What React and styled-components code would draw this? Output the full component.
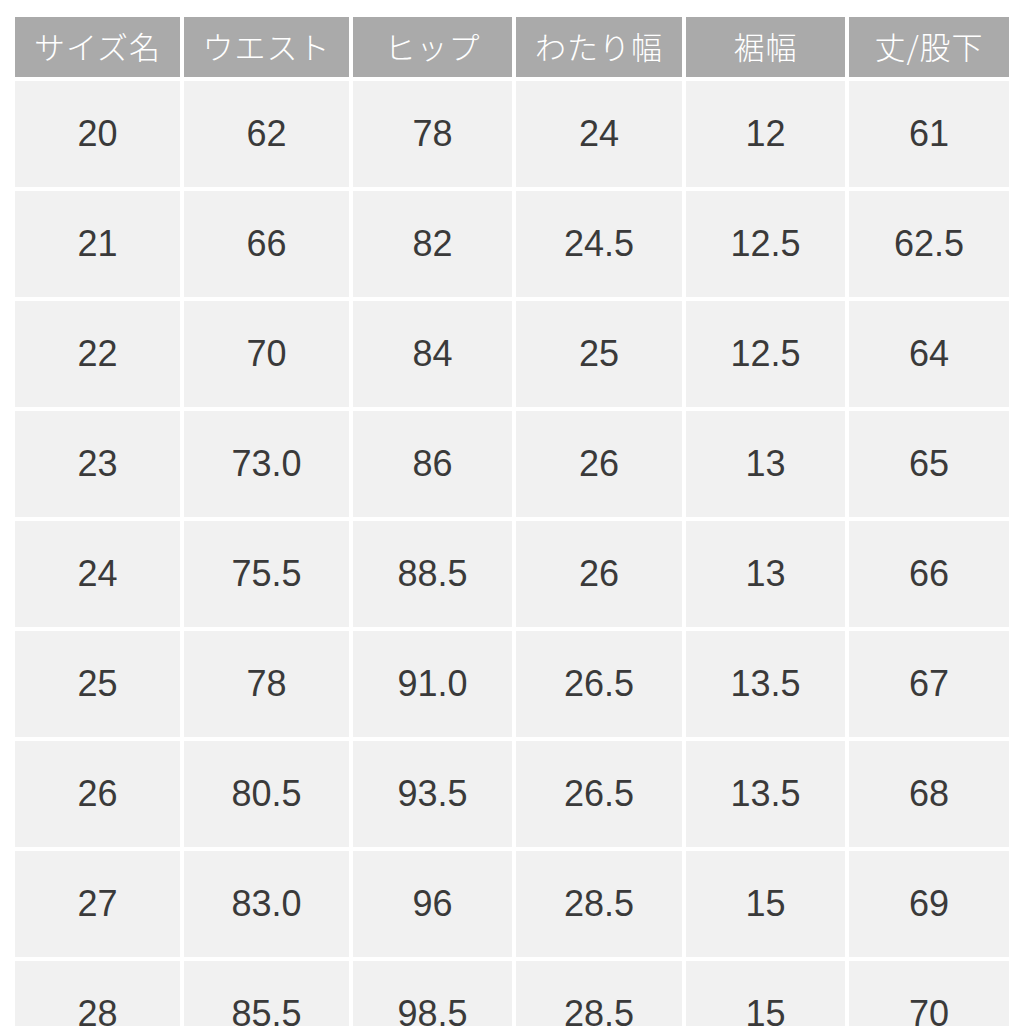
import React from 'react';
import styled, { createGlobalStyle } from 'styled-components';

const GlobalStyle = createGlobalStyle`
  html, body {
    margin: 0;
    padding: 0;
    background: #ffffff;
  }
  body {
    font-family: "Noto Sans CJK JP", "Noto Sans", sans-serif;
    color: #333333;
  }
`;

const HEADERS = ['サイズ名', 'ウエスト', 'ヒップ', 'わたり幅', '裾幅', '丈/股下'];

const ROWS = [
  ['20', '62', '78', '24', '12', '61'],
  ['21', '66', '82', '24.5', '12.5', '62.5'],
  ['22', '70', '84', '25', '12.5', '64'],
  ['23', '73.0', '86', '26', '13', '65'],
  ['24', '75.5', '88.5', '26', '13', '66'],
  ['25', '78', '91.0', '26.5', '13.5', '67'],
  ['26', '80.5', '93.5', '26.5', '13.5', '68'],
  ['27', '83.0', '96', '28.5', '15', '69'],
  ['28', '85.5', '98.5', '28.5', '15', '70'],
];

const Page = styled.div`
  padding: 17px 18px 0 15px;
  height: 1026px;
  overflow: hidden;
  box-sizing: border-box;
`;

const Table = styled.div`
  display: grid;
  grid-template-columns: 165px 165px 159px 166px 159px 160px;
  grid-auto-rows: 106px;
  grid-template-rows: 60px;
  gap: 4px;
`;

const HeadCell = styled.div`
  background: #aaaaaa;
  color: #ffffff;
  font-size: 31px;
  font-weight: 300;
  letter-spacing: 1px;
  display: flex;
  align-items: center;
  justify-content: center;
  line-height: 1;
  padding-bottom: 4px;
  box-sizing: border-box;
`;

const Cell = styled.div`
  background: #f1f1f1;
  color: #3a3a3a;
  font-family: "Liberation Sans", Arial, sans-serif;
  font-size: 36px;
  display: flex;
  align-items: center;
  justify-content: center;
  line-height: 1;
`;

export default function App() {
  return (
    <>
      <GlobalStyle />
      <Page>
        <Table>
          {HEADERS.map(h => (
            <HeadCell key={h}>{h}</HeadCell>
          ))}
          {ROWS.map(row =>
            row.map((v, i) => <Cell key={row[0] + '-' + i}>{v}</Cell>)
          )}
        </Table>
      </Page>
    </>
  );
}
